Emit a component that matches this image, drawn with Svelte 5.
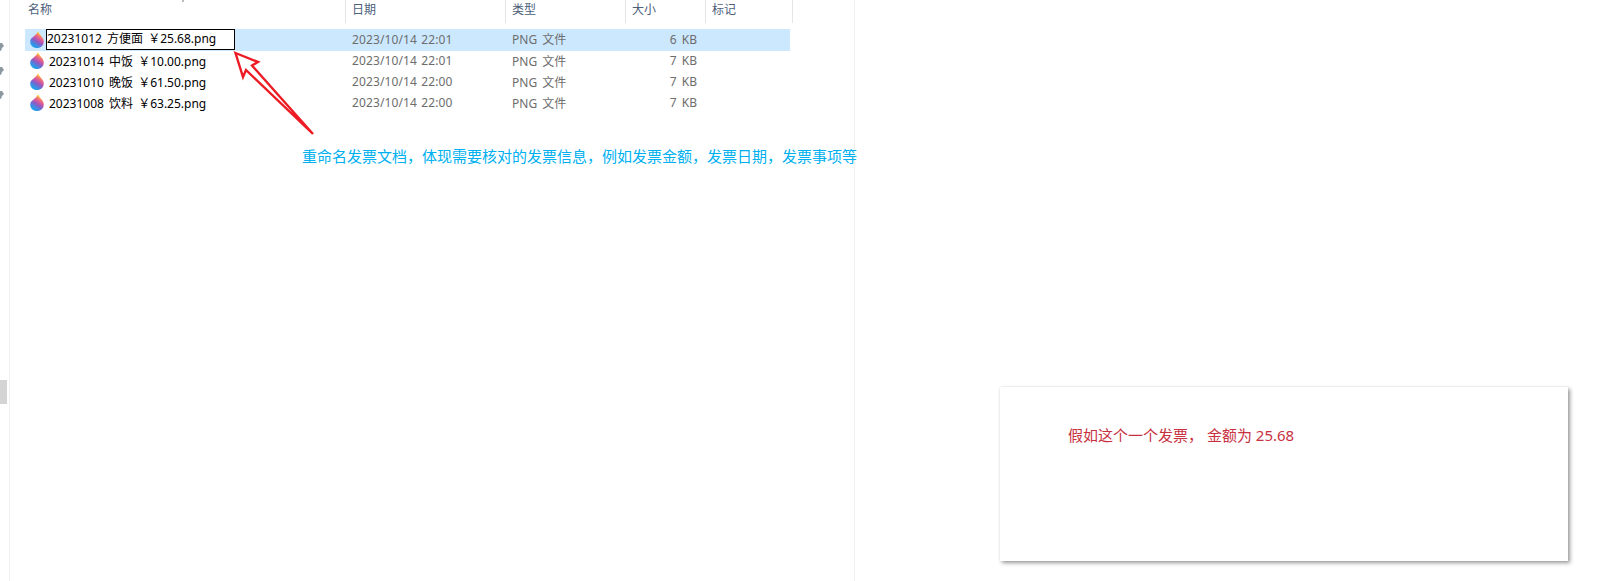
<script>
  const files = [
    { name: '20231012 方便面 ￥25.68.png', date: '2023/10/14 22:01', type: 'PNG 文件', size: '6 KB', editing: true },
    { name: '20231014 中饭 ￥10.00.png', date: '2023/10/14 22:01', type: 'PNG 文件', size: '7 KB' },
    { name: '20231010 晚饭 ￥61.50.png', date: '2023/10/14 22:00', type: 'PNG 文件', size: '7 KB' },
    { name: '20231008 饮料 ￥63.25.png', date: '2023/10/14 22:00', type: 'PNG 文件', size: '7 KB' },
  ]
  const columns = ['名称', '日期', '类型', '大小', '标记']
</script>

<div class="page">
  <div class="rail">
    <div class="pins">
      {#each [0, 1, 2] as i (i)}
        <svg class="pin" width="9" height="10" viewBox="0 0 9 10">
          <path d="M-4 1 L2 1 L4 4 L2 6 L1 9 L-4 6 Z" fill="#8b989f" />
        </svg>
      {/each}
    </div>
    <div class="scroll"></div>
  </div>

  <div class="explorer">
    <div class="head">
      {#each columns as c, i}
        <div class="col" class:first={i === 0}>{c}</div>
      {/each}
    </div>
    <div class="rows">
      {#each files as f}
        <div class="row" class:selected={f.editing}>
          <div class="name">
            <svg class="drop" width="14" height="17" viewBox="0 0 14 17">
              <defs>
                <linearGradient id="dropfill" x1="0.15" y1="0.95" x2="0.65" y2="0">
                  <stop offset="0" stop-color="#10aaf0" />
                  <stop offset="0.22" stop-color="#3f8ce2" />
                  <stop offset="0.42" stop-color="#8a5cc6" />
                  <stop offset="0.6" stop-color="#d4589f" />
                  <stop offset="0.76" stop-color="#f47a72" />
                  <stop offset="0.88" stop-color="#fdc237" />
                  <stop offset="1" stop-color="#fee02a" />
                </linearGradient>
              </defs>
              <path d="M8.2 0 C8.2 3 13.8 6 13.8 10.4 C13.8 14.2 10.8 17 7 17 C3.2 17 0.2 14.2 0.2 10.4 C0.2 6.4 6 5.2 8.2 0 Z" fill="url(#dropfill)" />
            </svg>
            {#if f.editing}
              <span class="edit">{f.name}</span>
            {:else}
              <span class="label">{f.name}</span>
            {/if}
          </div>
          <div class="cell date">{f.date}</div>
          <div class="cell">{f.type}</div>
          <div class="cell size">{f.size}</div>
          <div></div>
        </div>
      {/each}
    </div>
  </div>

  <div class="aside">
    <div class="invoice">假如这个一个发票， 金额为 25.68</div>
  </div>

  <div class="caret"></div>

  <svg class="arrow" width="100" height="100" viewBox="0 0 100 100">
    <path d="M5.5 3 L28 12 L22 15.5 L83 84 L16 20 L13 27 Z" fill="#fff" stroke="#ed1c24" stroke-width="2.4" stroke-linejoin="miter" />
  </svg>
  <div class="note">重命名发票文档，体现需要核对的发票信息，例如发票金额，发票日期，发票事项等</div>
</div>

<style>
  :global(body) { background: #fff; }
  .page {
    position: relative;
    display: flex;
    width: 1597px;
    height: 581px;
    overflow: hidden;
    background: #fff;
    font-family: "Noto Sans", "Noto Sans CJK SC", sans-serif;
    font-size: 12px;
  }
  .rail {
    width: 9px;
    flex: none;
    display: flex;
    flex-direction: column;
  }
  .pins {
    display: flex;
    flex-direction: column;
    gap: 14px;
    padding-top: 42px;
  }
  .pin { display: block; }
  .scroll {
    width: 7px;
    height: 24px;
    margin-top: 280px;
    background: #d4d4d4;
  }
  .explorer {
    width: 844px;
    flex: none;
    border-left: 1px solid #f0f0f0;
    border-right: 1px solid #f0f0f0;
  }
  .head {
    display: grid;
    grid-template-columns: 335px 160px 120px 80px 88px;
    height: 23px;
  }
  .col {
    border-left: 1px solid #e5e5e5;
    padding-left: 6px;
    line-height: 20px;
    color: #4c607a;
  }
  .col:last-child { border-right: 1px solid #e5e5e5; }
  .col.first { border-left: none; padding-left: 18px; }
  .rows {
    margin-top: 6px;
    margin-left: 15px;
    width: 765px;
  }
  .row {
    display: grid;
    grid-template-columns: 320px 160px 120px 80px 85px;
    height: 21px;
    align-items: center;
    color: #6d6d6d;
    word-spacing: 2px;
  }
  .row.selected { height: 22px; background: #cce8ff; }
  .name {
    display: flex;
    align-items: center;
    color: #000;
    white-space: pre;
  }
  .drop { margin: 0 0 2px 5px; flex: none; }
  .label { margin: 0 0 2px 5px; }
  .edit {
    box-sizing: border-box;
    width: 189px;
    height: 21px;
    line-height: 17px;
    margin: 0 0 1px 2px;
    border: 1px solid #000;
    background: #fff;
  }
  .cell { padding: 0 0 2px 7px; }
  .date { word-spacing: 1px; letter-spacing: 0.12px; }
  .size { text-align: right; padding-right: 8px; }
  .aside { flex: none; }
  .invoice {
    box-sizing: border-box;
    width: 568px;
    height: 174px;
    margin: 387px 0 0 145px;
    padding: 37px 0 0 68px;
    background: #fff;
    color: #c8313f;
    font-size: 15px;
    box-shadow: 2px 2px 4px rgba(0, 0, 0, 0.4), 0 0 2px rgba(0, 0, 0, 0.08);
  }
  .caret {
    position: absolute;
    left: 182px;
    top: 0;
    width: 2px;
    height: 2px;
    background: #bbb;
  }
  .arrow {
    position: absolute;
    left: 230px;
    top: 50px;
  }
  .note {
    position: absolute;
    left: 302px;
    top: 146px;
    color: #00b0f0;
    font-size: 15px;
    line-height: 20px;
    white-space: nowrap;
  }
</style>
